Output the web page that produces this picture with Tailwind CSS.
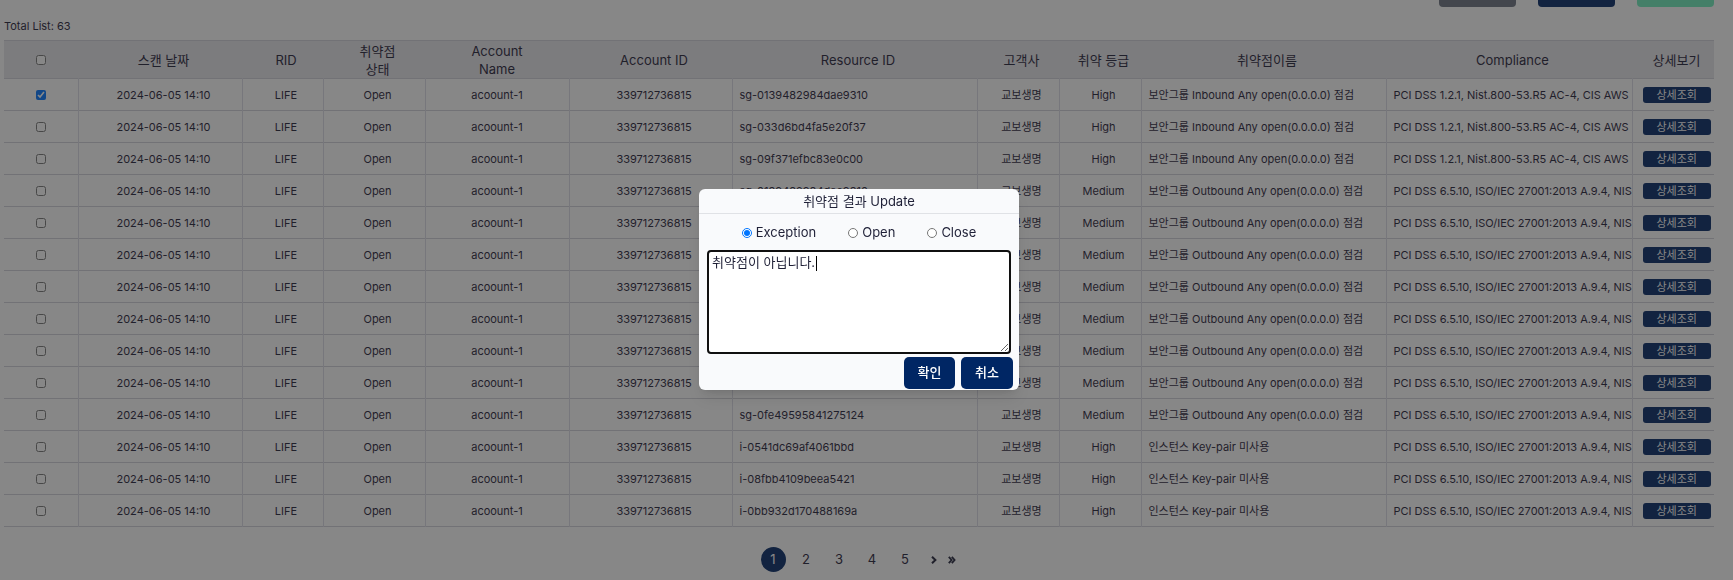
<!DOCTYPE html>
<html lang="ko">
<head>
<meta charset="utf-8">
<title>취약점 결과</title>
<script src="https://cdn.jsdelivr.net/npm/@tailwindcss/browser@4"></script>
</head>
<body class="min-h-screen overflow-hidden bg-white font-['Inter','Noto_Sans_CJK_KR',sans-serif] text-[11px] text-[#1f2037]">
<main class="pl-1 pr-[19px]">
  <div class="flex h-[7px] items-end justify-end gap-[22px] overflow-hidden">
    <button type="button" aria-label="초기화" class="h-8 w-[77px] shrink-0 rounded bg-[#6b7280]"></button>
    <button type="button" aria-label="조회" class="h-8 w-[77px] shrink-0 rounded bg-[#002664]"></button>
    <button type="button" aria-label="엑셀" class="h-8 w-[77px] shrink-0 rounded bg-[#6eedbc]"></button>
  </div>
  <p class="mt-[11px] mb-[6px] leading-4">Total List: 63</p>
  <table class="w-full table-fixed border-collapse text-center">
    <colgroup>
      <col class="w-[74px]"><col class="w-[164px]"><col class="w-[81px]"><col class="w-[102px]"><col class="w-[144px]"><col class="w-[163px]"><col class="w-[245px]"><col class="w-[82px]"><col class="w-[82px]"><col class="w-[245px]"><col class="w-[246px]"><col class="w-[82px]">
    </colgroup>
    <thead>
      <tr class="h-[38px] border-y border-[#d1d1d9] bg-[#e6e6eb] text-[13px] leading-[18px] *:p-0 *:font-normal">
        <th><input type="checkbox" aria-label="전체 선택" class="mx-auto block size-2.5"></th>
        <th><span class="pl-[7px]">스캔 날짜</span></th>
        <th><span class="pl-[7px]">RID</span></th>
        <th><div class="pl-[7px]">취약점<br>상태</div></th>
        <th>Account<br>Name</th>
        <th><span class="pl-[7px]">Account ID</span></th>
        <th><span class="pl-[7px]">Resource ID</span></th>
        <th><span class="pl-[7px]">고객사</span></th>
        <th><span class="pl-[7px]">취약 등급</span></th>
        <th><span class="pl-[7px]">취약점이름</span></th>
        <th><span class="pl-[7px]">Compliance</span></th>
        <th><span class="pl-[7px]">상세보기</span></th>
      </tr>
    </thead>
    <tbody id="rows"></tbody>
  </table>
  <nav aria-label="페이지" class="mt-5 flex items-center justify-center gap-2 text-[13px]">
    <a href="#1" aria-current="page" class="flex size-[25px] items-center justify-center rounded-full bg-[#002664] text-white">1</a>
    <a href="#2" class="flex size-[25px] items-center justify-center">2</a>
    <a href="#3" class="flex size-[25px] items-center justify-center">3</a>
    <a href="#4" class="flex size-[25px] items-center justify-center">4</a>
    <a href="#5" class="flex size-[25px] items-center justify-center">5</a>
    <span class="flex gap-1">
      <a href="#next" aria-label="다음" class="flex h-[25px] w-4 items-center justify-center"><svg width="6" height="8" viewBox="0 0 6 8" fill="none" stroke="currentColor" stroke-width="2"><path d="M1 .7 4.4 4 1 7.3"/></svg></a>
      <a href="#last" aria-label="마지막" class="flex h-[25px] w-3 items-center justify-center"><svg width="8" height="8" viewBox="0 0 8 8" fill="none" stroke="currentColor" stroke-width="1.8"><path d="M.8.8 3.6 4 .8 7.2M3.8.8 6.6 4 3.8 7.2"/></svg></a>
    </span>
  </nav>
</main>

<div class="fixed inset-0 flex items-center justify-center bg-[#212121]/54 pr-[15px] pb-0.5">
  <form role="dialog" aria-labelledby="dialog-title" class="flex w-80 flex-col rounded-md bg-[#f9fafc] text-[13px] shadow-lg">
    <h2 id="dialog-title" class="border-b border-[#e0e2e6] pt-[3px] pb-0.5 text-center leading-[19px]">취약점 결과 Update</h2>
    <div class="flex h-9 items-center justify-center gap-8 pt-0.5">
      <label class="flex items-center gap-1"><input type="radio" name="state" checked class="size-2.5">Exception</label>
      <label class="flex items-center gap-1"><input type="radio" name="state" class="size-2.5">Open</label>
      <label class="flex items-center gap-1"><input type="radio" name="state" class="size-2.5">Close</label>
    </div>
    <div class="relative mx-2 flex">
      <textarea id="reason" aria-label="사유" class="h-[104px] w-full resize rounded border-2 border-[#101010] bg-white px-[3px] py-px leading-[19px] caret-transparent outline-none">취약점이 아닙니다.</textarea>
      <span aria-hidden="true" class="absolute top-1.5 left-[109px] h-[15px] w-px bg-black"></span>
    </div>
    <div class="flex justify-end gap-1.5 pt-[3px] pr-1.5 pb-px">
      <button type="button" class="h-8 w-[51px] rounded-[5px] bg-[#002664] font-medium text-white">확인</button>
      <button type="button" class="h-8 w-[52px] rounded-[5px] bg-[#002664] font-medium text-white">취소</button>
    </div>
  </form>
</div>

<script>
const inbound = ['High', '보안그룹 Inbound Any open(0.0.0.0) 점검', 'PCI DSS 1.2.1, Nist.800-53.R5 AC-4, CIS AWS'];
const outbound = ['Medium', '보안그룹 Outbound Any open(0.0.0.0) 점검', 'PCI DSS 6.5.10, ISO/IEC 27001:2013 A.9.4, NIS'];
const keypair = ['High', '인스턴스 Key-pair 미사용', 'PCI DSS 6.5.10, ISO/IEC 27001:2013 A.9.4, NIS'];
const data = [
  ['sg-0139482984dae9310', inbound], ['sg-033d6bd4fa5e20f37', inbound], ['sg-09f371efbc83e0c00', inbound],
  ['sg-0139482984dae9310', outbound], ['sg-033d6bd4fa5e20f37', outbound], ['sg-09f371efbc83e0c00', outbound],
  ['sg-0139482984dae9310', outbound], ['sg-033d6bd4fa5e20f37', outbound], ['sg-09f371efbc83e0c00', outbound],
  ['sg-0139482984dae9310', outbound], ['sg-0fe49595841275124', outbound],
  ['i-0541dc69af4061bbd', keypair], ['i-08fbb4109beea5421', keypair], ['i-0bb932d170488169a', keypair]
];
document.getElementById('rows').innerHTML = data.map(([id, [level, name, rule]], i) => `
  <tr class="h-8 border-b border-[#d1d1d9] leading-4 *:overflow-hidden *:border-r *:border-r-[#dcdce6] *:p-0 *:whitespace-nowrap *:last:border-r-0">
    <td><input type="checkbox" aria-label="${id} 선택" ${i ? '' : 'checked'} class="mx-auto block size-2.5"></td>
    <td><span class="pl-[7px]">2024-06-05 14:10</span></td>
    <td><span class="pl-[7px]">LIFE</span></td>
    <td><span class="pl-[7px]">Open</span></td>
    <td>acoount-1</td>
    <td><span class="pl-[7px]">339712736815</span></td>
    <td class="text-left"><span class="pl-[7px]">${id}</span></td>
    <td><span class="pl-[7px]">교보생명</span></td>
    <td><span class="pl-[7px]">${level}</span></td>
    <td class="text-left"><span class="pl-[7px]">${name}</span></td>
    <td class="text-left"><span class="pl-[7px]">${rule}</span></td>
    <td><div class="flex justify-center pl-[7px]"><button type="button" class="h-4 w-[68px] rounded-[3px] bg-[#002664] leading-4 text-white">상세조회</button></div></td>
  </tr>`).join('');
const reason = document.getElementById('reason');
reason.focus();
reason.setSelectionRange(reason.value.length, reason.value.length);
</script>
</body>
</html>
